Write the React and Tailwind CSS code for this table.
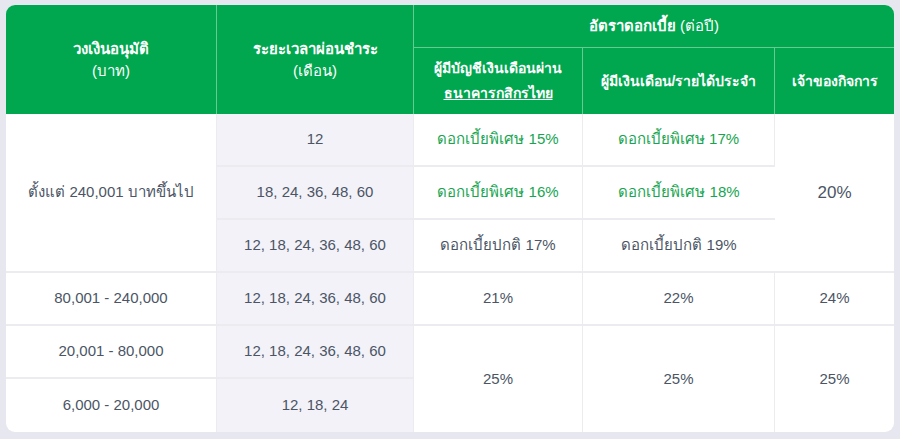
const cell = "text-center align-middle text-[15px] text-[#4b5565] border-[#ebebf0]";
const side = "bg-[#f3f2f8]";
const green = "text-[#16a550]";

export default function App() {
  return (
    <section className="min-h-screen bg-[#e7e7ef] pl-[6px] pt-[5px]" style={{ fontFamily: '"Liberation Sans", "Noto Sans", sans-serif' }}>
      <div className="w-[888px] overflow-hidden rounded-[9px] bg-white">
        <table className="w-full table-fixed border-separate border-spacing-0">
          <colgroup>
            <col className="w-[211px]" />
            <col className="w-[197px]" />
            <col className="w-[169px]" />
            <col className="w-[192px]" />
            <col className="w-[119px]" />
          </colgroup>
          <thead className="bg-[#00a74f] text-white">
            <tr className="h-[43px]">
              <th rowSpan={2} className="border-r border-white/40 text-[15px] font-bold leading-[22px]">
                วงเงินอนุมัติ
                <br />
                <span className="font-normal">(บาท)</span>
              </th>
              <th rowSpan={2} className="border-r border-white/40 text-[15px] font-bold leading-[22px]">
                ระยะเวลาผ่อนชำระ
                <br />
                <span className="font-normal">(เดือน)</span>
              </th>
              <th colSpan={3} className="border-b border-white/40 text-[15px] font-bold">
                อัตราดอกเบี้ย <span className="font-normal">(ต่อปี)</span>
              </th>
            </tr>
            <tr className="h-[66px]">
              <th className="border-r border-white/40 text-[14px] font-bold leading-[25px]">
                ผู้มีบัญชีเงินเดือนผ่าน
                <br />
                <span className="underline">ธนาคารกสิกรไทย</span>
              </th>
              <th className="border-r border-white/40 text-[14px] font-bold">ผู้มีเงินเดือน/รายได้ประจำ</th>
              <th className="text-[14px] font-bold">เจ้าของกิจการ</th>
            </tr>
          </thead>
          <tbody>
            <tr className="h-[53px]">
              <td rowSpan={3} className={`${cell} border-r border-b-2`}>ตั้งแต่ 240,001 บาทขึ้นไป</td>
              <td className={`${cell} ${side} border-r border-b-2`}>12</td>
              <td className={`${cell} ${green} border-r border-b-2`}>ดอกเบี้ยพิเศษ 15%</td>
              <td className={`${cell} ${green} border-r border-b-2`}>ดอกเบี้ยพิเศษ 17%</td>
              <td rowSpan={3} className={`${cell} border-b-2 text-[17px]`}>20%</td>
            </tr>
            <tr className="h-[53px]">
              <td className={`${cell} ${side} border-r border-b-2`}>18, 24, 36, 48, 60</td>
              <td className={`${cell} ${green} border-r border-b-2`}>ดอกเบี้ยพิเศษ 16%</td>
              <td className={`${cell} ${green} border-b-2`}>ดอกเบี้ยพิเศษ 18%</td>
            </tr>
            <tr className="h-[53px]">
              <td className={`${cell} ${side} border-r border-b-2`}>12, 18, 24, 36, 48, 60</td>
              <td className={`${cell} border-r border-b-2`}>ดอกเบี้ยปกติ 17%</td>
              <td className={`${cell} border-b-2`}>ดอกเบี้ยปกติ 19%</td>
            </tr>
            <tr className="h-[53px]">
              <td className={`${cell} border-r border-b-2`}>80,001 - 240,000</td>
              <td className={`${cell} ${side} border-r border-b-2`}>12, 18, 24, 36, 48, 60</td>
              <td className={`${cell} border-r border-b-2`}>21%</td>
              <td className={`${cell} border-r border-b-2`}>22%</td>
              <td className={`${cell} border-b-2`}>24%</td>
            </tr>
            <tr className="h-[53px]">
              <td className={`${cell} border-r border-b-2`}>20,001 - 80,000</td>
              <td className={`${cell} ${side} border-r border-b-2`}>12, 18, 24, 36, 48, 60</td>
              <td rowSpan={2} className={`${cell} border-r`}>25%</td>
              <td rowSpan={2} className={`${cell} border-r`}>25%</td>
              <td rowSpan={2} className={cell}>25%</td>
            </tr>
            <tr className="h-[53px]">
              <td className={`${cell} border-r`}>6,000 - 20,000</td>
              <td className={`${cell} ${side} border-r`}>12, 18, 24</td>
            </tr>
          </tbody>
        </table>
      </div>
    </section>
  );
}
